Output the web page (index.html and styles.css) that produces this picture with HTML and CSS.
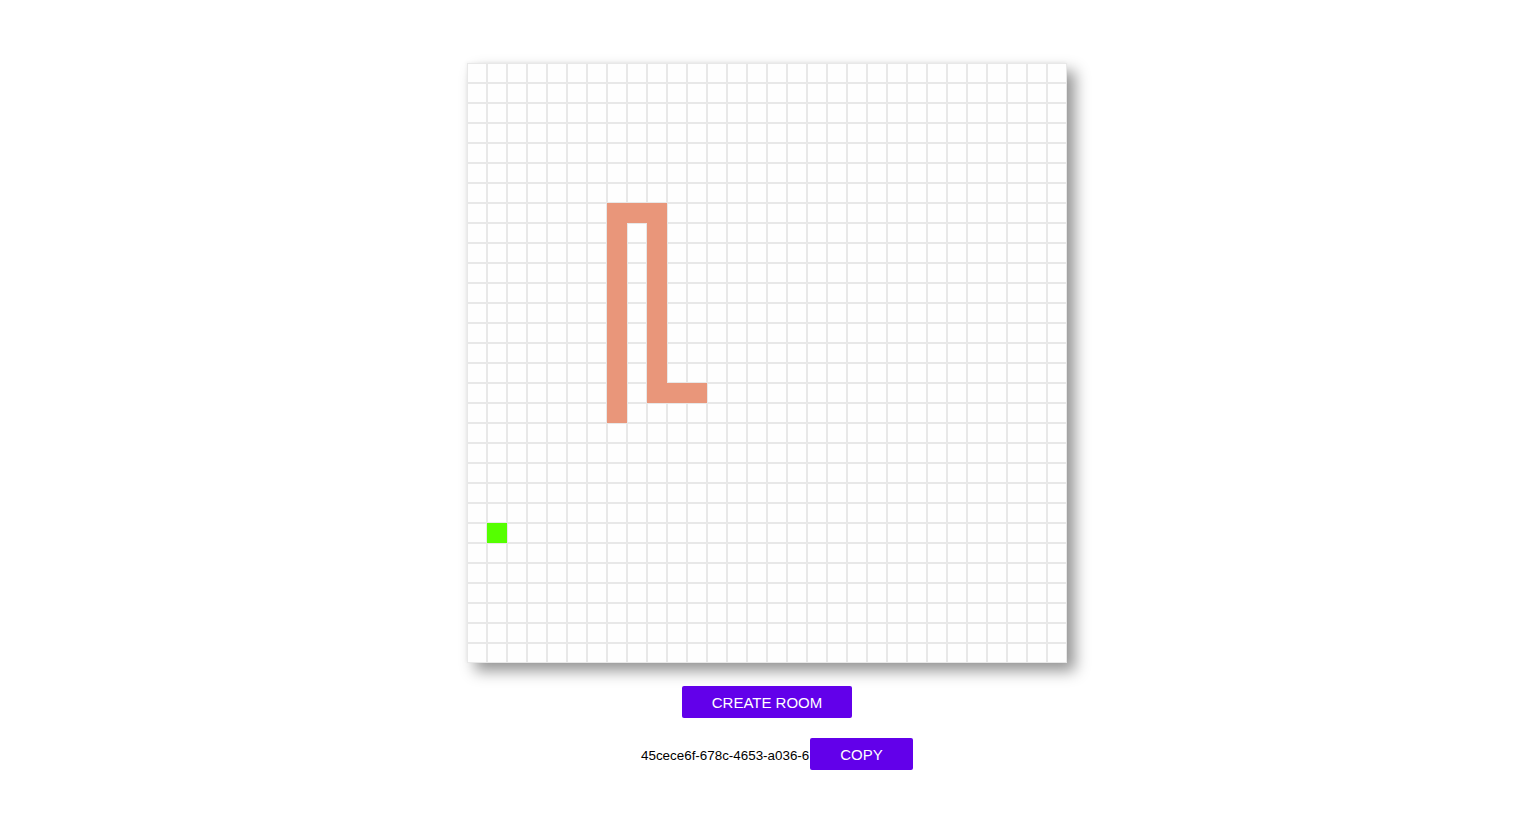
FILE: index.html
```html
<!DOCTYPE html>
<html>
<head>
<meta charset="utf-8">
<link rel="stylesheet" href="styles.css">
</head>
<body>
<main class="app">
  <div class="board" id="board"></div>
  <button class="btn btn-create">CREATE ROOM</button>
  <div class="room-row">
    <span class="room-id">45cece6f-678c-4653-a036-6</span>
    <button class="btn btn-copy">COPY</button>
  </div>
</main>
<script src="script.js"></script>
</body>
</html>
```

FILE: styles.css
```css
* { box-sizing: border-box; }
html, body { margin: 0; padding: 0; background: #fff; }
body { font-family: "Liberation Sans", Arial, sans-serif; }
.app {
  display: flex;
  flex-direction: column;
  align-items: center;
  padding-top: 63px;
  padding-right: 4px;
}
.board {
  display: grid;
  grid-template-columns: repeat(30, 20px);
  grid-template-rows: repeat(30, 20px);
  width: 600px;
  height: 600px;
  background: #fff;
  box-shadow: 8px 8px 14px rgba(0,0,0,0.42), -1px -1px 3px rgba(0,0,0,0.04);
}
.cell {
  border: 1px solid #e8e8e8;
  background: #fefefe;
}
.cell.snake { background: #e9967a; border-color: #e9967a; }
.cell.food { background: #55ff00; border-color: #55ff00; }
.btn {
  background: #6200ea;
  color: #fff;
  border: none;
  border-radius: 2px;
  font-family: "Liberation Sans", Arial, sans-serif;
  font-size: 15px;
  height: 32px;
  padding: 0;
  cursor: pointer;
}
.btn-create { width: 170px; margin-top: 23px; }
.room-row {
  display: flex;
  align-items: center;
  margin-top: 20px;
  margin-left: 20px;
}
.room-id {
  display: block;
  width: 169px;
  white-space: nowrap;
  font-size: 13.4px;
  color: #000;
  padding-top: 2px;
}
.btn-copy { width: 103px; }
```

FILE: script.js
```js
var board = document.getElementById('board');
var snake = {};
function add(c, r) { snake[c + ',' + r] = true; }
for (var c = 7; c <= 9; c++) add(c, 7);
for (var r = 7; r <= 17; r++) add(7, r);
for (var r2 = 7; r2 <= 16; r2++) add(9, r2);
for (var c2 = 9; c2 <= 11; c2++) add(c2, 16);
for (var y = 0; y < 30; y++) {
  for (var x = 0; x < 30; x++) {
    var d = document.createElement('div');
    d.className = 'cell';
    if (snake[x + ',' + y]) d.className += ' snake';
    if (x === 1 && y === 23) d.className += ' food';
    board.appendChild(d);
  }
}
```
